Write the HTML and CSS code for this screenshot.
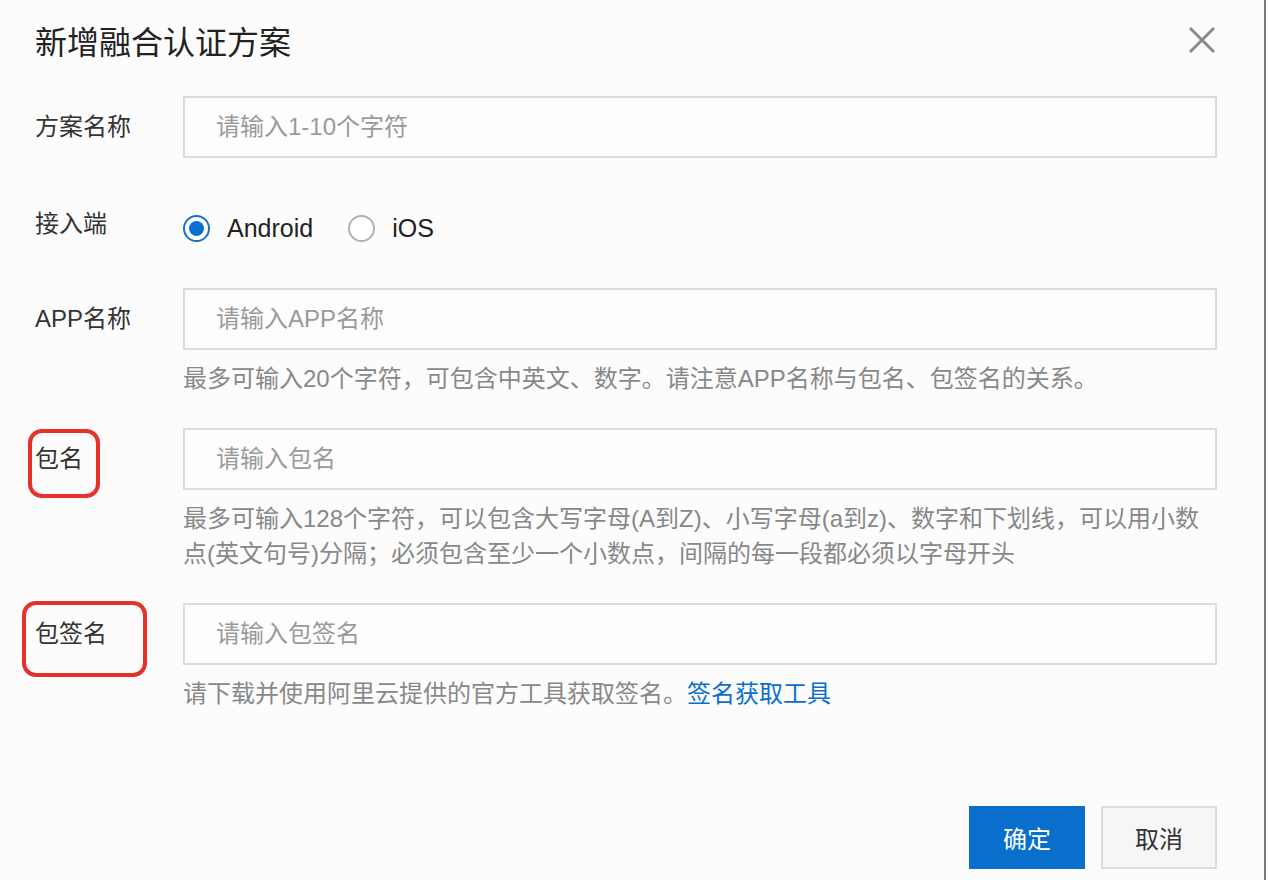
FILE: index.html
```html
<!DOCTYPE html>
<html lang="zh-CN">
<head>
  <meta charset="UTF-8" />
  <title>新增融合认证方案</title>
  <link rel="stylesheet" href="styles.css">
</head>
<body>
  <div class="dialog">
    <div class="dialog-header">
      <h1>新增融合认证方案</h1>
      <span class="close-btn">
        <svg width="28" height="28" viewBox="0 0 28 28"><path d="M2 2 L26 26 M26 2 L2 26" stroke="#8a8a8a" stroke-width="3" fill="none"/></svg>
      </span>
    </div>

    <div class="form">
      <div class="form-item">
        <label class="item-label">方案名称</label>
        <div class="item-control">
          <div class="input">请输入1-10个字符</div>
        </div>
      </div>

      <div class="form-item radio-row">
        <label class="item-label">接入端</label>
        <div class="item-control radio-group">
          <span class="radio checked"></span><span class="radio-text">Android</span>
          <span class="radio"></span><span class="radio-text">iOS</span>
        </div>
      </div>

      <div class="form-item">
        <label class="item-label">APP名称</label>
        <div class="item-control">
          <div class="input">请输入APP名称</div>
          <div class="help">最多可输入20个字符，可包含中英文、数字。请注意APP名称与包名、包签名的关系。</div>
        </div>
      </div>

      <div class="form-item">
        <label class="item-label">包名<span class="mark mark-short"></span></label>
        <div class="item-control">
          <div class="input">请输入包名</div>
          <div class="help">最多可输入128个字符，可以包含大写字母(A到Z)、小写字母(a到z)、数字和下划线，可以用小数<br>点(英文句号)分隔；必须包含至少一个小数点，间隔的每一段都必须以字母开头</div>
        </div>
      </div>

      <div class="form-item">
        <label class="item-label">包签名<span class="mark mark-long"></span></label>
        <div class="item-control">
          <div class="input">请输入包签名</div>
          <div class="help">请下载并使用阿里云提供的官方工具获取签名。<a href="#">签名获取工具</a></div>
        </div>
      </div>
    </div>

    <div class="dialog-footer">
      <button class="btn btn-primary">确定</button>
      <button class="btn">取消</button>
    </div>
  </div>
</body>
</html>
```

FILE: styles.css
```css
body {
  margin: 0;
  background: #fcfcfc;
  font-family: "Liberation Sans", "Noto Sans CJK SC", sans-serif;
  color: #333;
}

.dialog {
  width: 1266px;
  height: 880px;
  box-sizing: border-box;
  border-right: 2px solid #7a7a7a;
  padding: 20px 47px 0 35px;
}

.dialog-header {
  display: flex;
  justify-content: space-between;
  align-items: center;
  height: 40px;
  margin-bottom: 36px;
}

.dialog-header h1 {
  margin: 0;
  font-size: 32px;
  font-weight: normal;
  color: #222;
  font-family: "Noto Sans CJK SC", sans-serif;
}

.close-btn {
  display: flex;
  margin-right: 1px;
}

.form-item {
  display: flex;
  margin-bottom: 32px;
}

.item-label {
  position: relative;
  width: 148px;
  flex-shrink: 0;
  font-size: 24px;
  line-height: 62px;
  color: #333;
}

.item-control {
  flex: 1;
}

.input {
  height: 62px;
  box-sizing: border-box;
  border: 2px solid #dcdcdc;
  background: #fdfdfd;
  padding-left: 31px;
  font-size: 24px;
  line-height: 58px;
  color: #9a9a9a;
}

.help {
  margin-top: 11px;
  font-size: 24px;
  line-height: 35px;
  color: #888;
}

.help a {
  color: #0a6fcc;
  text-decoration: none;
}

.radio-row {
  padding: 20px 0 10px;
}

.radio-row .item-label {
  line-height: 28px;
}

.radio-group {
  display: flex;
  align-items: center;
  height: 36px;
}

.radio {
  width: 27px;
  height: 27px;
  box-sizing: border-box;
  border: 2px solid #b0b0b0;
  border-radius: 50%;
  background: #fff;
  position: relative;
}

.radio.checked {
  border-color: #1570cc;
}

.radio.checked::after {
  content: "";
  position: absolute;
  left: 4px;
  top: 4px;
  width: 15px;
  height: 15px;
  border-radius: 50%;
  background: #0b6fcd;
}

.radio-text {
  font-size: 25px;
  color: #222;
  margin: 0 35px 0 17px;
}

.mark {
  position: absolute;
  border: 4px solid #e8302a;
  border-radius: 14px;
  box-sizing: border-box;
}

.mark-short {
  left: -7px;
  top: 1px;
  width: 72px;
  height: 69px;
}

.mark-long {
  left: -13px;
  top: -2px;
  width: 125px;
  height: 76px;
}

.dialog-footer {
  display: flex;
  justify-content: flex-end;
  gap: 16px;
  margin-top: 95px;
}

.btn {
  width: 116px;
  height: 63px;
  box-sizing: border-box;
  border: 2px solid #dcdcdc;
  background: #f6f6f6;
  color: #333;
  font-size: 24px;
  font-family: "Noto Sans CJK SC", sans-serif;
  padding: 0;
}

.btn-primary {
  background: #0a6fcc;
  border-color: #0a6fcc;
  color: #fff;
}
```
